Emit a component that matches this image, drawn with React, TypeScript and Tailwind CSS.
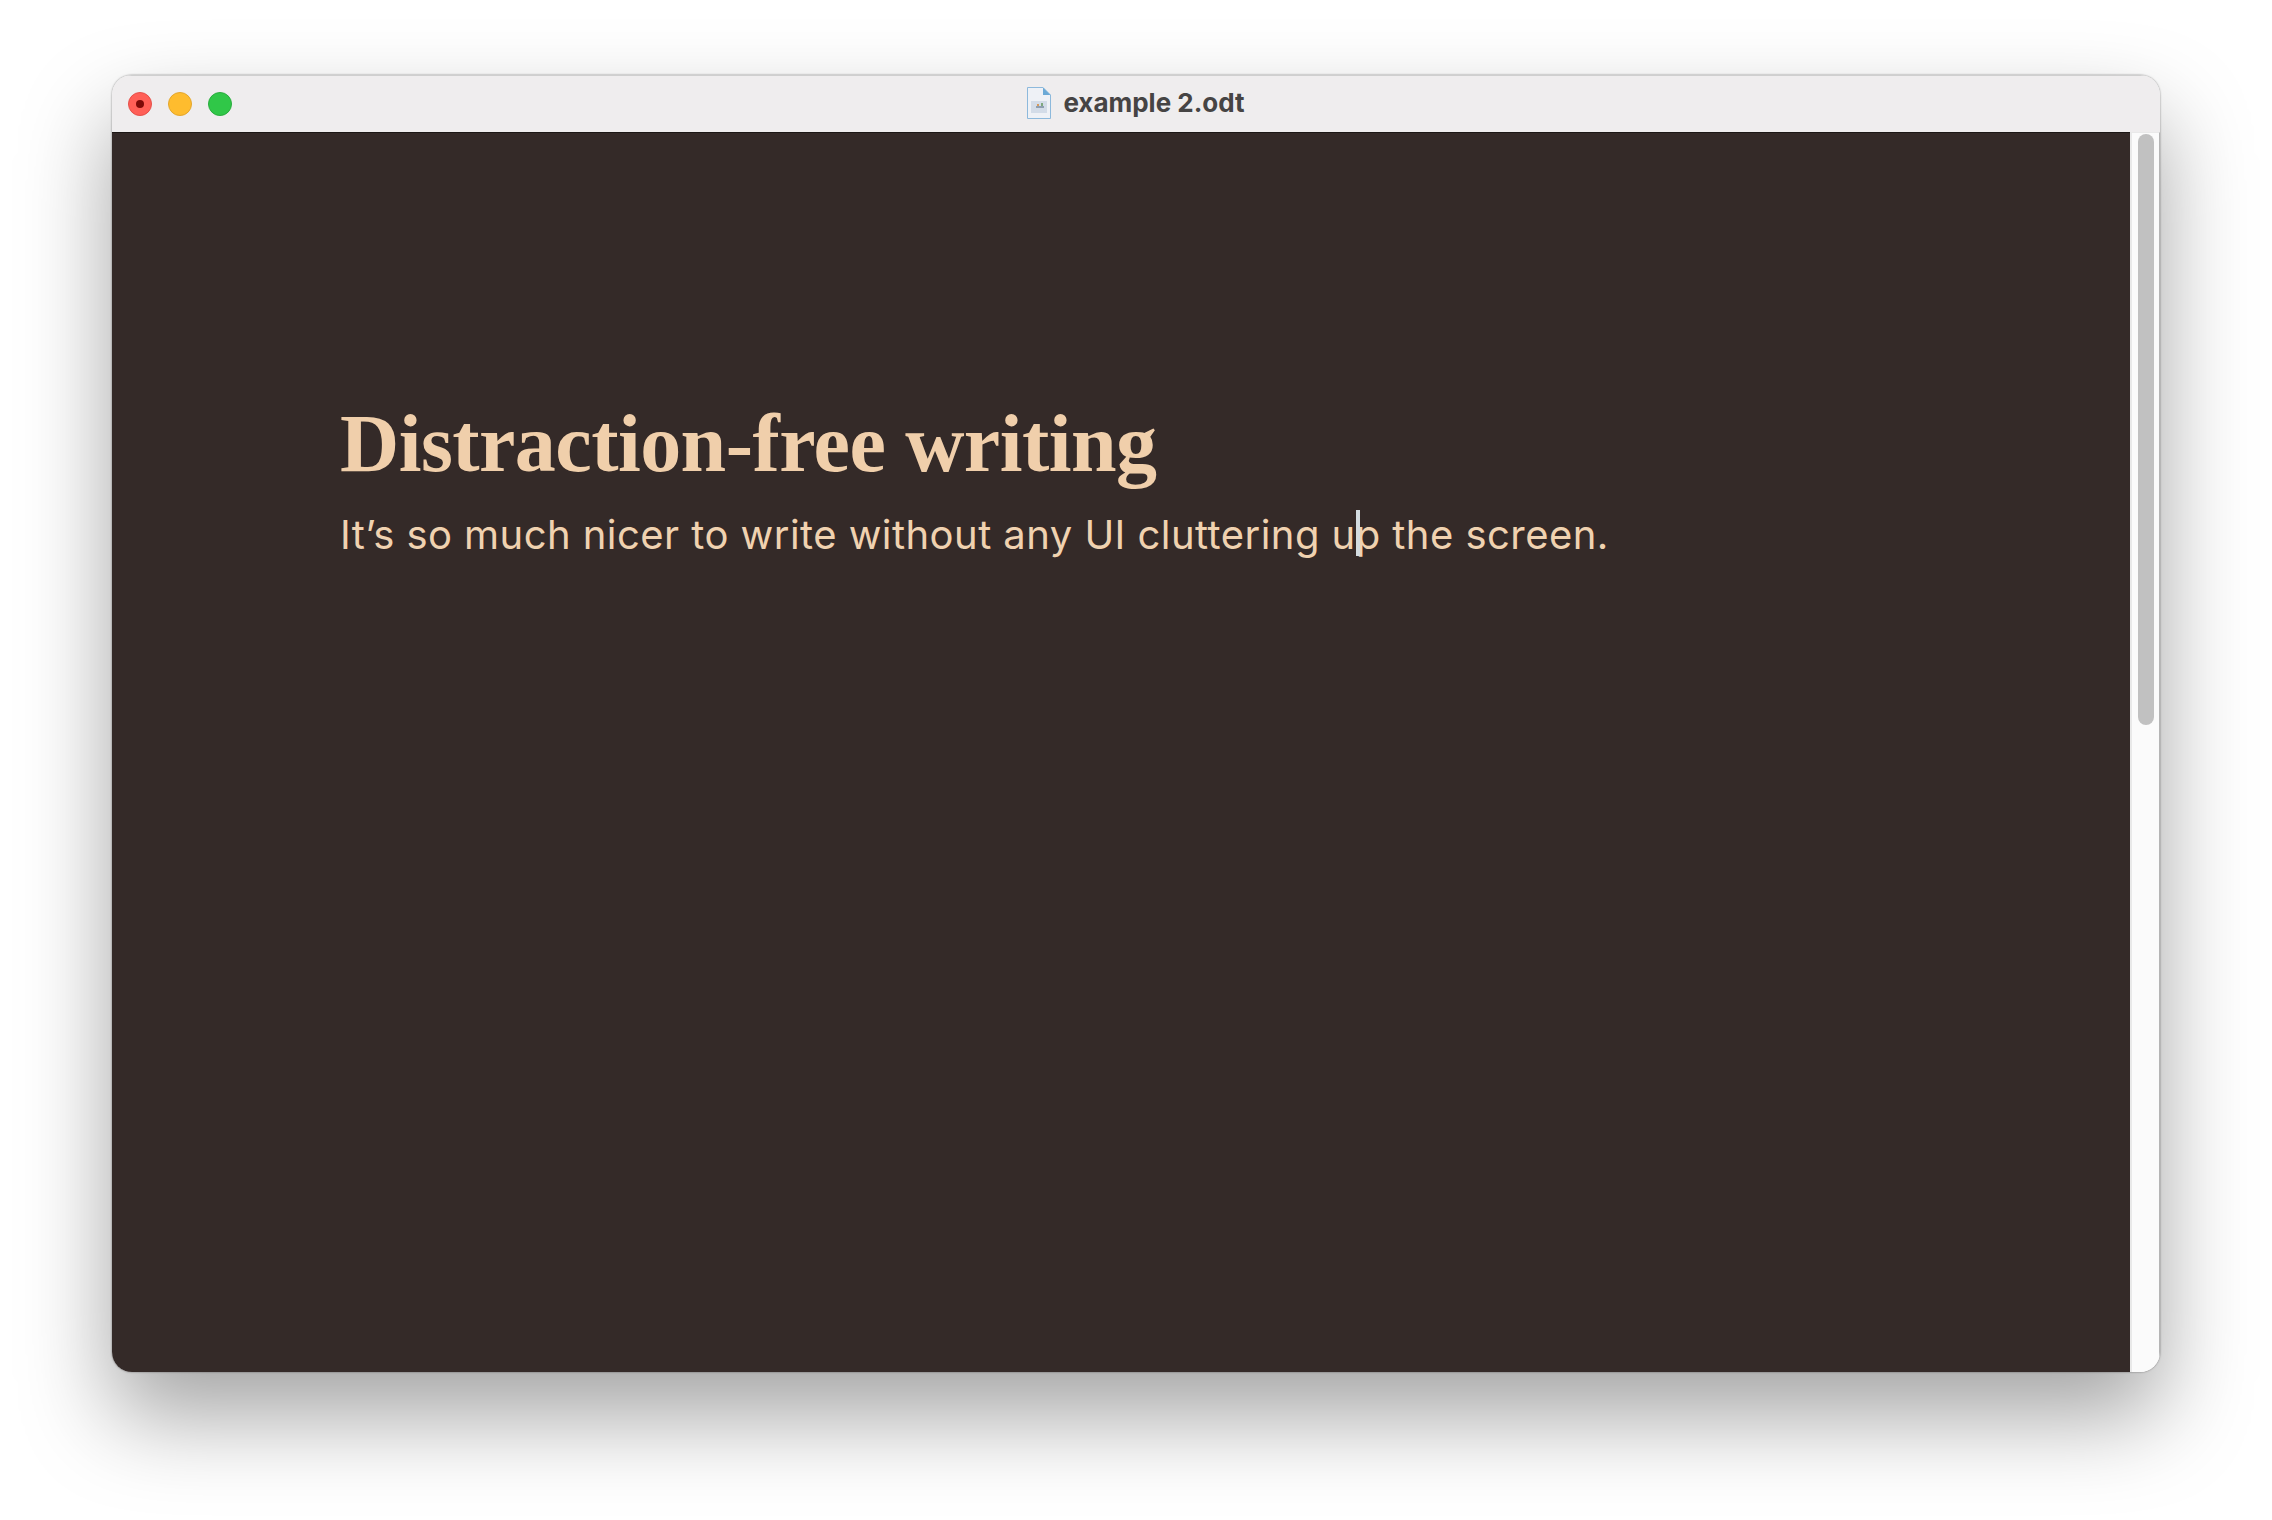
export default function App() {
  return (
    <div className="w-[2272px] h-[1520px] bg-white pt-[75px] pl-[112px] overflow-hidden font-['Inter',sans-serif]">
      <div className="w-[2048px] h-[1297px] rounded-[20px] flex flex-col overflow-hidden shadow-[0_44px_90px_rgba(0,0,0,0.36),0_0_2px_rgba(0,0,0,0.5)] bg-[#fbfbfb]">
        {/* title bar */}
        <div className="h-[57px] shrink-0 bg-[#efedee] border-t border-[#cfcfcf] flex items-center relative">
          <div className="flex items-center gap-[16px] pl-[16px]">
            <div className="w-[24px] h-[24px] rounded-full bg-[#ff5f57] border border-[#e5504a] flex items-center justify-center">
              <div className="w-[8px] h-[8px] rounded-full bg-[#7d0a08]" />
            </div>
            <div className="w-[24px] h-[24px] rounded-full bg-[#febc2e] border border-[#e3a62d]" />
            <div className="w-[24px] h-[24px] rounded-full bg-[#30c748] border border-[#2aac3e]" />
          </div>
          <div className="absolute inset-0 flex items-center justify-center gap-[12px] pb-[2px]">
            <svg width="24" height="32" viewBox="0 0 24 32">
              <path d="M0.5 0.5H16L23.5 8V31.5H0.5Z" fill="#eef1f6" stroke="#8db9dc" />
              <path d="M16 0.5L23.5 8H16Z" fill="#6ba9d6" />
              <rect x="4" y="14" width="16" height="12" fill="#d3dce8" />
              <path d="M9 19h8v2H9z" fill="#8f9fb0" />
              <path d="M10 17h2v2h-2z" fill="#d99a5b" />
              <path d="M14 16h2v3h-2z" fill="#7fa87f" />
            </svg>
            <span className="text-[26px] font-bold text-[#464444] leading-none">example 2.odt</span>
          </div>
        </div>

        <div className="flex-1 flex min-h-0">
          {/* document */}
          <div className="w-[2018px] bg-[#342a28] border-t border-[#1c1715] pl-[228px] pt-[266px]">
            <h1 className="font-['Liberation_Serif',serif] font-bold text-[82px] leading-[90px] tracking-[-0.55px] text-[#f0cfab]">
              Distraction-free writing
            </h1>
            <p className="mt-[21px] text-[40px] leading-[50px] tracking-[0.45px] text-[#f0d2b0] whitespace-nowrap relative w-fit">
              It’s so much nicer to write without any UI cluttering u
              <span className="inline-block relative w-0 h-0">
                <span className="absolute left-0 bottom-[-7px] w-[4px] h-[46px] bg-[#d3dce0]" />
              </span>
              p the screen.
            </p>
          </div>
          {/* scrollbar */}
          <div className="flex-1 bg-[#fbfbfb] border-l-2 border-t border-[#e9e9e9] border-r border-r-[#b5b5b5] pl-[6px] pt-[1px]">
            <div className="w-[16px] h-[591px] rounded-full bg-[#c1c1c1]" />
          </div>
        </div>
      </div>
    </div>
  );
}
